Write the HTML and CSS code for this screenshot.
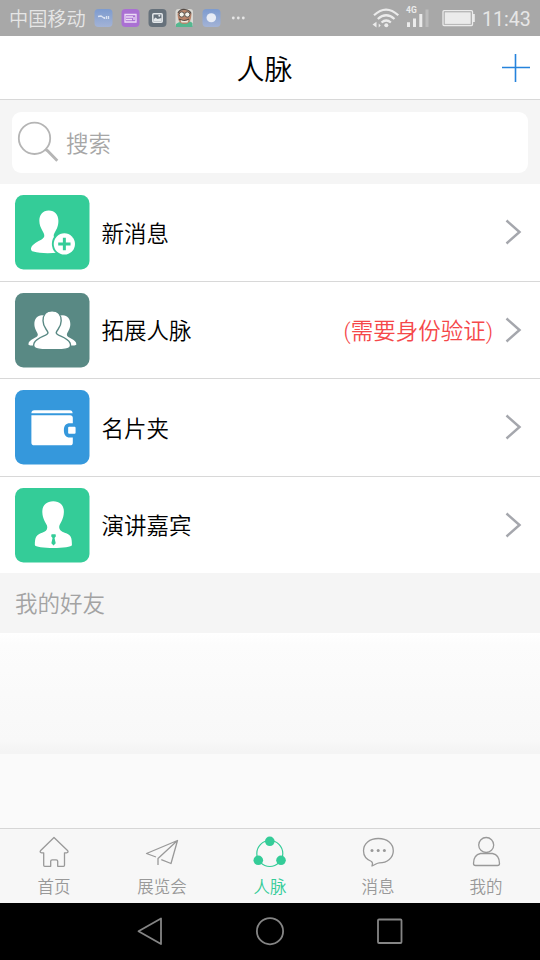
FILE: index.html
```html
<!DOCTYPE html>
<html lang="zh-CN">
<head>
<meta charset="utf-8">
<title>人脉</title>
<link rel="stylesheet" href="styles.css">
</head>
<body>
<div class="phone">
  <div class="status">
    <span class="carrier">中国移动</span>
    <svg class="apps" width="160" height="36" viewBox="90 0 160 36">
      <defs>
        <linearGradient id="blue" x1="0" y1="0" x2="0" y2="1"><stop offset="0" stop-color="#7d9bcf"/><stop offset="1" stop-color="#a3b3d6"/></linearGradient>
      </defs>
      <rect x="94.500" y="9" width="18" height="18" rx="4" fill="url(#blue)"/>
      <path d="M98 16.500l3-.5 3 2M104.500 19v-2M106.500 19v-3M108.500 19v-3" stroke="#dbe3f2" stroke-width="1.300" fill="none"/>
      <rect x="121.500" y="9" width="18" height="18" rx="4" fill="#aa70d3"/>
      <path d="M125 14.500h11v7.500h-11zM126 17h7M126 19.500h6M134 17v3" stroke="#ecdcf6" stroke-width="1.300" fill="none"/>
      <rect x="148.500" y="9" width="18" height="18" rx="4" fill="#66717b"/>
      <rect x="152.800" y="13.800" width="9.400" height="8.400" rx="1" fill="#66717b" stroke="#e4e8eb" stroke-width="1.500"/>
      <path d="M153.500 21.500v-2l2-2 2 1.500 4-1v3.500z" fill="#e4e8eb"/><circle cx="159.300" cy="15.800" r="1" fill="#e4e8eb"/>
      <rect x="175.500" y="9" width="17.500" height="18" rx="3" fill="#d9d8d3"/>
      <path d="M176 27v-3q4-3 8-2 6-2 8.500 1v4z" fill="#55b790"/>
      <path d="M177.500 14q1-4 7-4t7 4l-.5 4q-1 6-6.500 6t-6.500-6z" fill="#b9846b"/>
      <path d="M178 13q2-4 7-3.500t6 4M179 19q5 3 10 0" fill="none" stroke="#554b45" stroke-width="1.200"/>
      <circle cx="181.700" cy="14.500" r="2.600" fill="#f3f1ea" stroke="#5a544f"/><circle cx="187.300" cy="14.500" r="2.600" fill="#f3f1ea" stroke="#5a544f"/>
      <path d="M180.500 20q4 2 8 0l-1 2.500h-6z" fill="#eee9df"/>
      <rect x="202.500" y="9" width="18" height="18" rx="4" fill="url(#blue)"/>
      <ellipse cx="211.300" cy="17.700" rx="4.800" ry="4.500" fill="#e8ecf5"/>
      <g fill="#e6e6e6"><circle cx="233.300" cy="18" r="1.400"/><circle cx="238.300" cy="18" r="1.400"/><circle cx="243.300" cy="18" r="1.400"/></g>
    </svg>
    <svg class="signals" width="110" height="36" viewBox="370 0 110 36">
      <g fill="none" stroke="#ebebeb" stroke-width="2.200">
        <path d="M374 15.300q12-11.500 24.300 0M377.800 19q8.400-7.500 16.700 0M381.500 22.500q4.700-4 9.400 0"/>
      </g>
      <circle cx="386.300" cy="25.200" r="2" fill="#ebebeb"/>
      <path d="M376.500 21.700v5.800l-4-2.900zM378.700 23.500v4l2-2z" fill="#ebebeb"/>
      <path d="M407 22.300h3v4.700h-3zM413 18.500h3v8.500h-3zM419.300 14h3v13h-3z" fill="#ebebeb"/>
      <path d="M425.500 9.500h3v17.500h-3z" fill="#bcbcbc"/>
      <text class="net" x="406" y="13">4G</text>
      <rect x="443" y="10.700" width="29.500" height="14.800" rx="1" fill="none" stroke="#ebebeb" stroke-width="1.300"/>
      <rect x="444.700" y="12.300" width="26" height="11.600" fill="#ebebeb"/>
      <path d="M473 14h1.800v8h-1.800z" fill="#ebebeb"/>
    </svg>
    <span class="time">11:43</span>
  </div>

  <header class="header">
    <h1>人脉</h1>
    <svg class="add" width="28" height="28" viewBox="0 0 28 28"><path d="M0 13.500h28M13.500 0v28" stroke="#2583dc" stroke-width="1.600"/></svg>
  </header>

  <div class="search-area">
    <div class="search">
      <svg width="42" height="42" viewBox="17 121 42 42" fill="none" stroke="#b5b5b5"><circle cx="34.500" cy="138.300" r="15.700" stroke-width="1.800"/><path d="M45.500 149.500l2 1.200 9.800 10" stroke-width="2.800"/></svg>
      <span>搜索</span>
    </div>
  </div>

  <ul class="list">
    <li class="row">
      <svg class="badge" viewBox="0 0 75 75">
        <rect width="75" height="75" rx="8.500" fill="#34cc98"/>
        <path d="M34 15.500c6.300 0 9.700 4.500 9.700 10.500 0 6.500-2.500 9.500-4.500 13.500-1 3 1.300 5 4.500 6.500L44 58c-10 1-19 .8-25.500-1-3.500-1-3-5 .5-7.500 4-3.500 9.500-4.500 10.500-8 .6-4-5-7.500-5-15.500 0-6 3.300-10.500 9.500-10.500z" fill="#fff"/>
        <circle cx="49.700" cy="49.300" r="12.600" fill="#34cc98"/><circle cx="49.700" cy="49.300" r="10.700" fill="#fff"/>
        <path d="M43.500 49.300h12.400M49.700 43.100v12.400" stroke="#34cc98" stroke-width="3"/>
      </svg>
      <span class="name">新消息</span>
      <svg class="arrow" viewBox="0 0 16 26"><path d="M1.500 1.500L14.500 13l-13 11.500"/></svg>
    </li>
    <li class="row">
      <svg class="badge" viewBox="0 0 75 75">
        <rect width="75" height="75" rx="8.500" fill="#598984"/>
        <g fill="#fff">
          <path d="M27 22.500c-4.500 0-7.500 3.500-7.500 9 0 5 3 7.500 3.500 10.500 0 3.500-9.200 4-9.500 9.500 0 1 1 1.300 6.800 1.300l17-3V27c-3-3-6-4.500-10.300-4.500z"/>
          <path d="M48.200 22.500c4.500 0 7.500 3.500 7.500 9 0 5-3 7.500-3.500 10.500 0 3.500 9.300 4 9.600 9.500 0 1-1 1.300-6.800 1.300l-17-3V27c3-3 5.900-4.500 10.200-4.500z"/>
          <path stroke="#598984" stroke-width="1.400" d="M37.300 18c5.700 0 9.200 4 9.200 10 0 6.500-4 8.500-5 12 0 3.500 10.500 3.500 14 10.500 2 5.500-2.500 6.700-18.200 6.700S17.200 56 19.200 50.500c3.500-7 14-7 14-10.500-1-3.500-5-5.500-5-12 0-6 3.400-10 9.100-10z"/>
        </g>
      </svg>
      <span class="name">拓展人脉</span>
      <span class="note">(需要身份验证)</span>
      <svg class="arrow" viewBox="0 0 16 26"><path d="M1.500 1.500L14.500 13l-13 11.500"/></svg>
    </li>
    <li class="row">
      <svg class="badge" viewBox="0 0 75 75">
        <rect width="75" height="75" rx="8.500" fill="#3598dc"/>
        <path d="M16.500 23.300c0-2 1-3 3-3h35.500c2 0 3 1 3 3zM16.500 25.300h39c1.700 0 2.700 1 2.700 2.700v5.500h-3c-4 0-6 2.500-6 7s2 7.300 6 7.300h3V53c0 1.700-1 2.700-2.700 2.700h-36c-1.800 0-3-1-3-2.700z" fill="#fff"/>
        <rect x="53.500" y="37" width="7.500" height="7" rx="1" fill="#fff"/>
      </svg>
      <span class="name">名片夹</span>
      <svg class="arrow" viewBox="0 0 16 26"><path d="M1.500 1.500L14.500 13l-13 11.500"/></svg>
    </li>
    <li class="row">
      <svg class="badge" viewBox="0 0 75 75">
        <rect width="75" height="75" rx="8.500" fill="#34cc98"/>
        <path d="M38.500 13.300c7.300 0 11 4.600 10.700 11-.3 7-3.200 10-4.400 13.200-1.200 4.200 1 6 5.200 7.500 6.500 2 7.300 4.500 7.300 12.500 0 4-37.300 4-37.300 0 0-8 1.300-10.500 7.300-12.500 4.200-1.500 6-3.500 4.800-7.500-1.300-3.200-4.300-6.200-4.600-13.200-.3-6.400 3.700-11 11-11z" fill="#fff"/>
        <path d="M36.800 46.500h4l.4 2-1.400 1.800 1.200 5.200-2.200 2.500-2.200-2.500 1.200-5.200-1.400-1.800z" fill="#34cc98"/>
      </svg>
      <span class="name">演讲嘉宾</span>
      <svg class="arrow" viewBox="0 0 16 26"><path d="M1.500 1.500L14.500 13l-13 11.500"/></svg>
    </li>
  </ul>

  <h2 class="section">我的好友</h2>
  <div class="fade"></div>
  <div class="blank"></div>

  <nav class="tabs">
    <a class="tab">
      <svg viewBox="36 835 36 36"><path d="M54 837.500L67.500 850.500q1.500 2-1 2.300h-2v12.500q0 1-1 1h-5.800v-5q0-1.500-1.500-1.500h-4q-1.500 0-1.500 1.500v5h-6q-1 0-1-1v-12.500h-2q-2.500-.3-1-2.300z"/></svg>
      <span>首页</span>
    </a>
    <a class="tab">
      <svg viewBox="144 835 36 36"><path d="M156 857l-9.500-3.500L177.500 840.500 171 863.500l-9.700-3.800M177.500 840.500L158 858.500v6.500"/></svg>
      <span>展览会</span>
    </a>
    <a class="tab active">
      <svg viewBox="252 835 36 36"><circle cx="269.800" cy="853.500" r="13" stroke-width="1.200"/><g fill="#34cc98" stroke="none"><circle cx="269.800" cy="841.300" r="4.800"/><circle cx="258.300" cy="860.300" r="4.800"/><circle cx="281" cy="860.300" r="4.800"/></g></svg>
      <span>人脉</span>
    </a>
    <a class="tab">
      <svg viewBox="360 835 36 36"><path d="M378.300 838.500c9 0 15 5 15 12.300 0 7-6 12-14 12-2.500 0-4 2-7.300 3.200.8-2 .8-3.500-.5-4.500-4.500-1.700-8-5.500-8-10.700 0-7.300 6-12.300 14.800-12.300z"/><g fill="#999" stroke="none"><circle cx="372" cy="850.500" r="1.500"/><circle cx="378.200" cy="850.500" r="1.500"/><circle cx="384.400" cy="850.500" r="1.500"/></g></svg>
      <span>消息</span>
    </a>
    <a class="tab">
      <svg viewBox="468 835 36 36"><circle cx="486.200" cy="845" r="7.500"/><path d="M480.500 853.500h12q7 1.500 7 10 0 2-2 2h-22q-2 0-2-2 0-8.500 7-10z"/></svg>
      <span>我的</span>
    </a>
  </nav>

  <div class="navbar">
    <svg viewBox="0 0 28 28"><path d="M2.500 14.300L25 1.500v25.500z"/></svg>
    <svg viewBox="0 0 28 28"><circle cx="14" cy="14.200" r="13.100"/></svg>
    <svg viewBox="0 0 28 28"><rect x="2" y="2.500" width="23.500" height="23.500" rx="1"/></svg>
  </div>
</div>
</body>
</html>
```

FILE: styles.css
```css
* { box-sizing: border-box; margin: 0; padding: 0; }

body {
  width: 540px;
  height: 960px;
  overflow: hidden;
  background: #fff;
  font-family: Roboto, "Noto Sans CJK SC", sans-serif;
  font-weight: 350;
}

svg { display: block; flex: none; overflow: visible; }

.phone {
  display: flex;
  flex-direction: column;
  width: 540px;
  height: 960px;
}

.status {
  display: flex;
  flex: none;
  align-items: center;
  height: 36px;
  padding-left: 9px;
  background: #a8a8a8;
  color: #e6e6e6;
}

.carrier {
  width: 81px;
  padding-top: 3px;
  font-size: 19.2px;
  line-height: 33px;
  white-space: nowrap;
}

.signals { margin-left: 120px; }

.net {
  fill: #ebebeb;
  font-size: 8.5px;
  font-weight: 700;
}

.time {
  margin-left: 2px;
  padding-top: 2px;
  font-size: 19.6px;
  font-weight: 400;
  line-height: 35px;
}

.header {
  display: grid;
  flex: none;
  grid-template-columns: 1fr auto 1fr;
  align-items: center;
  height: 64px;
  padding: 0 10px 0 0;
  border-bottom: 1px solid #d8d8d8;
}

.header h1 {
  grid-column: 2;
  padding: 6px 1px 0 0;
  font-size: 28px;
  font-weight: 350;
  line-height: 40px;
}

.add { justify-self: end; }

.search-area {
  flex: none;
  height: 84px;
  padding: 12px 12px 11px;
  background: #f5f5f5;
}

.search {
  display: flex;
  align-items: center;
  gap: 7px;
  height: 61px;
  padding: 0 0 1px 5px;
  border-radius: 9px;
  background: #fff;
  color: #a6a6a6;
  font-size: 22.5px;
}

.list { flex: none; height: 389px; list-style: none; }

.row {
  display: flex;
  align-items: center;
  height: 97.5px;
  padding: 0 19px 0 15px;
  border-bottom: 1px solid #d8d8d8;
}

.row:last-child { height: 96.5px; border-bottom: 0; }

.badge { width: 74.5px; height: 74.5px; }

.name {
  margin-left: 12px;
  padding-top: 3px;
  color: #000;
  font-size: 22.5px;
  line-height: 32px;
}

.note {
  margin-left: auto;
  padding-top: 3px;
  color: #f5484a;
  font-size: 22.5px;
  line-height: 32px;
}

.arrow { width: 16px; height: 26px; margin-left: auto; }
.note + .arrow { margin-left: 12px; }

.arrow path {
  fill: none;
  stroke: #a5a7ad;
  stroke-width: 2.5;
}

.section {
  flex: none;
  height: 60px;
  padding: 1px 0 0 15px;
  background: #f5f5f5;
  color: #a3a3a3;
  font-size: 22.5px;
  font-weight: 350;
  line-height: 61px;
}

.fade {
  flex: none;
  height: 121px;
  background: linear-gradient(#fff 0, #fcfcfc 12px, #f8f8f8 108px, #f4f4f4 118px, #f4f4f4 100%);
}

.blank { flex: 1; background: #fafafa; }

.tabs {
  display: grid;
  flex: none;
  grid-template-columns: repeat(5, 1fr);
  height: 75px;
  border-top: 1px solid #d6d6d6;
  background: #f7f7f7;
}

.tab {
  display: flex;
  flex-direction: column;
  align-items: center;
  padding-top: 6px;
  color: #999;
  font-size: 16.5px;
  line-height: 24px;
}

.tab svg {
  width: 36px;
  height: 36px;
  margin-bottom: 5px;
  fill: none;
  stroke: #999;
  stroke-width: 1.3;
  stroke-linejoin: round;
}

.tab.active { color: #34cc98; }
.tab.active svg { stroke: #34cc98; }

.navbar {
  display: flex;
  flex: none;
  justify-content: center;
  gap: 92px;
  height: 57px;
  padding-top: 14px;
  background: #000;
}

.navbar svg {
  width: 28px;
  height: 28px;
  fill: none;
  stroke: #858585;
  stroke-width: 1.8;
  stroke-linejoin: round;
}
```
